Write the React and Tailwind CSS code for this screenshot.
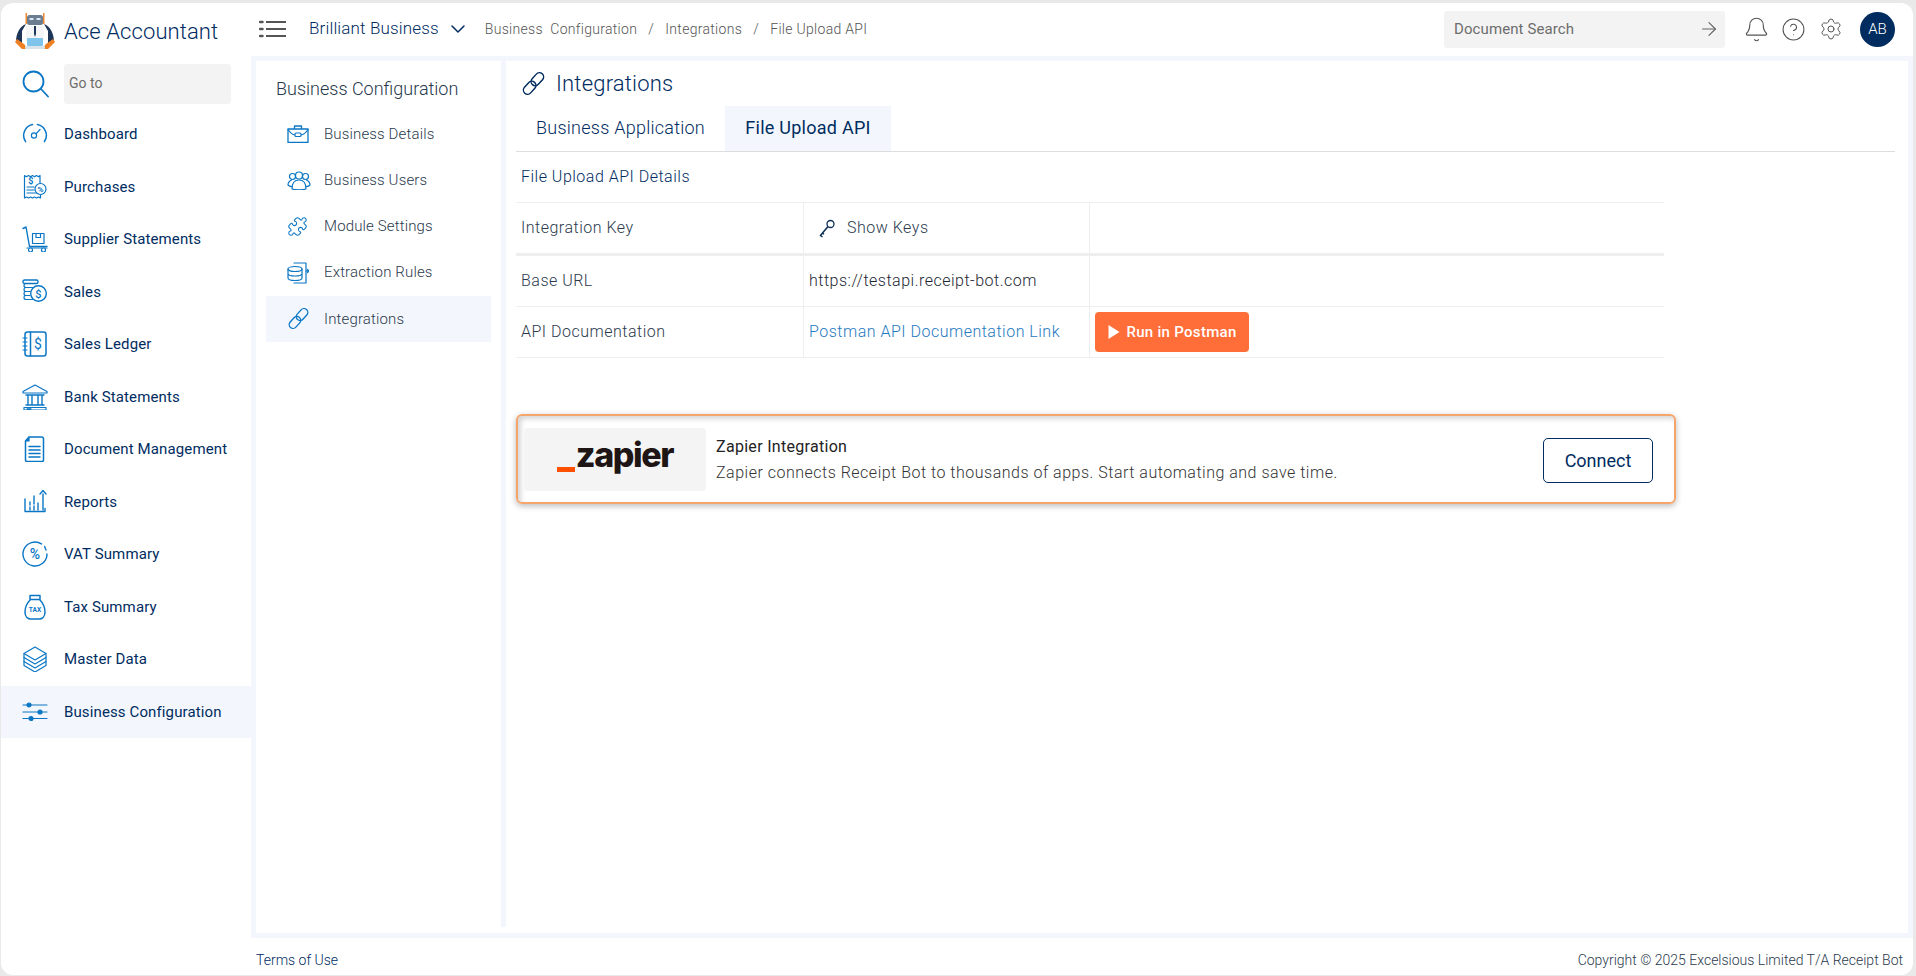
import React from "react";
import { Bell, CircleHelp, Settings, ArrowRight, ChevronDown, Puzzle } from "lucide-react";

const B = "#0b76c4";
const Ic = ({ children, w = 26, h = 26 }) => (
  <svg width={w} height={h} viewBox={`0 0 ${w} ${h}`} fill="none" stroke={B} strokeWidth="1.2" strokeLinecap="round" strokeLinejoin="round" className="shrink-0">
    {children}
  </svg>
);
const T = ({ x, y, s, children, c = B, w = 500 }) => (
  <text x={x} y={y} fontSize={s} fill={c} stroke="none" fontWeight={w} fontFamily="Roboto, sans-serif" textAnchor="middle">{children}</text>
);

const Chain = ({ size = 24, color = B, sw = 1.5 }) => (
  <svg width={size} height={size} viewBox="0 0 24 24" fill="none" stroke={color} strokeWidth={sw} className="shrink-0">
    <g transform="rotate(-48 12 12)">
      <rect x="-0.500" y="8" width="14" height="8" rx="4" />
      <rect x="10.500" y="8" width="14" height="8" rx="4" fill="none" />
    </g>
  </svg>
);

const icons = {
  dash: <Ic><path d="M3.600 20.600A11 11 0 0 1 10.500 3.600M15.500 3.600A11 11 0 0 1 22.400 20.600" strokeWidth="1.500" /><circle cx="12" cy="14.500" r="2.600" /><path d="M14 12.800 18 8.500" /></Ic>,
  purch: <Ic><path d="M2.500 24V1.500l2 1.200 2-1.200 2 1.200 2-1.200 2 1.200 2-1.200 2 1.200 1.500-1.200V9M18.500 21v3l-2-1-2 1-2-1-2 1-2-1-2 1-2-1-2 1" /><T x="9" y="10" s="9" w="700">$</T><path d="M5 13h7M5 16h7M5 19h10" /><circle cx="18.500" cy="15" r="5.500" fill="#fff" /><T x="18.500" y="18" s="8" w="700">%</T></Ic>,
  supp: <Ic><path d="M1 2.500 4 1l3.500 19.500H25" strokeWidth="1.400" /><rect x="10.500" y="7.500" width="11.500" height="10" /><path d="M14 7.500v4h4.500v-4" /><path d="M5 22h20" /><circle cx="8.500" cy="24" r="2" fill="#fff" /><circle cx="21.500" cy="24" r="2" fill="#fff" /></Ic>,
  sales: <Ic><rect x="1" y="1" width="15" height="3.500" rx="1.500" strokeWidth="1.400" /><path d="M4 4.500h10M4 4.500a2 2 0 0 0 0 4h9M4 8.500a2 2 0 0 0 0 4h5M4 12.500a2 2 0 0 0 0 4h4M4 16.500a2 2 0 0 0 0 4h7" /><circle cx="16.500" cy="14.500" r="7.800" fill="#fff" strokeWidth="1.400" /><T x="16.500" y="18.500" s="11">$</T></Ic>,
  ledger: <Ic><rect x="3" y="1" width="21" height="24" rx="2.500" strokeWidth="1.500" /><path d="M8.500 1v24" strokeWidth="1.500" /><path d="M1 7h4M1 11h4M1 15h4M1 19h4" /><T x="16" y="18" s="14" w="400">$</T></Ic>,
  bank: <Ic><path d="M13 1 1 7.500v1.500h24V7.500z" /><path d="M4 11h18M6 11v10M10 11v10M16 11v10M20 11v10M4 21h18" strokeWidth="1.400" /><path d="M2 23.500h22v2.500H2zM5 24.800h4" /></Ic>,
  doc: <Ic><path d="M7 1h12.500a2 2 0 0 1 2 2v21a1.500 1.500 0 0 1-1.500 1.500H5a1.500 1.500 0 0 1-1.500-1.500V5z" strokeWidth="1.500" /><path d="M3.500 5H7V1" fill={B} /><path d="M7 10.500h11M7 14h11M7 17.500h11M7 21h11" strokeWidth="1.500" /></Ic>,
  rep: <Ic><path d="M3 10v12.500h20v-3" strokeWidth="1.400" /><path d="M8 13v3M8 18v3M12 7v8M12 17v4M16 14v7M21 5v16" strokeWidth="1.400" /><path d="M18 5l3-3.500 3 3.500" strokeWidth="1.400" /></Ic>,
  vat: <Ic><path d="M25 13A12 12 0 1 1 19.500 2.900M22.600 5.600 24 9" strokeWidth="1.400" /><T x="13" y="18" s="14" w="500">%</T></Ic>,
  tax: <Ic><path d="M8 1.500h10v4H8zM8.500 5.500C4 10 3 14 3 18c0 5 3 7 6 7h8c3 0 6-2 6-7 0-4-1-8-5.500-12.500" strokeWidth="1.500" /><T x="13" y="18" s="6.500" w="700">TAX</T></Ic>,
  master: <Ic><path d="M13 1 2 7.500 13 14l11-6.500z" /><path d="M2 7.500v12L13 26l11-6.500v-12" /><path d="M2 11.500 13 18l11-6.500M2 15.500 13 22l11-6.500" /></Ic>,
  conf: <Ic h={20}><path d="M1 3h24M1 10h24M1 16.500h24" /><circle cx="7" cy="3" r="2" fill={B} /><circle cx="18" cy="10" r="2" fill={B} /><circle cx="9" cy="16.500" r="2" fill={B} /></Ic>,
};

const nav = [
  ["Dashboard", "dash"], ["Purchases", "purch"], ["Supplier Statements", "supp"], ["Sales", "sales"],
  ["Sales Ledger", "ledger"], ["Bank Statements", "bank"], ["Document Management", "doc"], ["Reports", "rep"],
  ["VAT Summary", "vat"], ["Tax Summary", "tax"], ["Master Data", "master"], ["Business Configuration", "conf"],
];

const sub = [
  ["Business Details", <Ic w={22} h={18}><path d="M1 4h20v13.500H1zM7.500 4V1h7v3" strokeWidth="1.300" /><path d="M1 4.500c2 3 4 5 7 5.500M21 4.500c-2 3-4 5-7 5.500" /><rect x="8" y="8" width="6" height="3.500" rx="1" fill="#fff" /></Ic>],
  ["Business Users", <Ic w={24} h={20}><circle cx="12" cy="5.500" r="3.500" /><circle cx="5.500" cy="6.500" r="3" /><circle cx="18.500" cy="6.500" r="3" /><path d="M5 19c0-6 3-9 7-9s7 3 7 9c-3 1-11 1-14 0zM4.500 10C2.500 11 1 13 1 15c1 1 2 1.500 3.500 1.700M19.500 10c2 1 3.500 3 3.500 5-1 1-2 1.500-3.500 1.700" /></Ic>],
  ["Module Settings", <Puzzle size={21} color={B} strokeWidth={1.200} className="shrink-0" />],
  ["Extraction Rules", <Ic w={22} h={22}><path d="M7 1h12v20H7" /><path d="M19 9h3M22 9l-1.500-1.500M22 9l-1.500 1.500" /><ellipse cx="8" cy="7" rx="7" ry="2.500" fill="#fff" /><path d="M1 7v9c0 1.500 3 2.500 7 2.500s7-1 7-2.500V7M1 11.500c0 1.500 3 2.500 7 2.500s7-1 7-2.500" /></Ic>],
  ["Integrations", <Chain size={23} color={B} sw={1.400} />],
];

const Robot = () => (
  <svg width="40" height="38" viewBox="0 0 40 38" className="shrink-0">
    <path d="M10.500 0h1.500v11h-1.500zM28 0h1.500v11H28z" fill="#f08a32" />
    <rect x="12" y="2" width="16" height="10" rx="2.500" fill="#6a7d91" />
    <rect x="14.500" y="5" width="4" height="2" fill="#d9e8f3" /><rect x="21.500" y="5" width="4" height="2" fill="#d9e8f3" />
    <path d="M11 11C5 13 1 20 1 29l6 3V18zM29 11c6 2 10 9 10 18l-6 3V18z" fill="#1d3658" />
    <path d="M11 13h18v15H11z" fill="#f3f5f7" />
    <path d="M19 13h2v8l-1 3-1-3z" fill="#1d3658" />
    <path d="M0 29l2-3 7 5 4 5H7zM40 29l-2-3-7 5-4 5h6z" fill="#ee7f22" />
    <rect x="12" y="25" width="16" height="8" rx="1" fill="#7fc4ea" />
    <rect x="10" y="33" width="20" height="3" rx="1" fill="#d9e3ea" />
  </svg>
);

const Key = () => (
  <svg width="20" height="20" viewBox="0 0 20 20" fill="none" stroke="#0d2f57" strokeWidth="1.300" className="shrink-0">
    <circle cx="13.500" cy="6" r="3.500" />
    <path d="M11 8.500 3 18M3.500 17.500l2 1.500M5.500 15l1.500 1.300" strokeWidth="1.500" />
  </svg>
);

const Cell = ({ children, className = "" }) => (
  <div className={`flex items-center px-[5px] border-r border-[#eeeeee] whitespace-nowrap ${className}`}>{children}</div>
);

export default function App() {
  return (
    <div className="w-[1916px] h-[976px] bg-[#e9e9e9] pt-[3px] pl-px pr-[3px] pb-px overflow-hidden text-[#002c5f] font-['Roboto',sans-serif]">
      <div className="h-full w-full bg-white rounded-xl overflow-hidden flex">
        {/* Sidebar */}
        <aside className="w-[250px] shrink-0 flex flex-col">
          <div className="h-[58px] flex items-center pl-[14px] gap-[9px] shrink-0">
            <Robot />
            <span className="text-[22px] font-light leading-none whitespace-nowrap tracking-[0.1px]">Ace Accountant</span>
          </div>
          <div className="h-[45px] mb-[2px] flex items-center pl-[21px] gap-[15px] shrink-0">
            <svg width="27" height="28" viewBox="0 0 27 28" fill="none" stroke={B} strokeWidth="1.800" strokeLinecap="round" className="shrink-0">
              <circle cx="11.500" cy="11.500" r="10" /><path d="M19 19l7 7.500" />
            </svg>
            <div className="w-[167px] h-[40px] bg-[#f3f3f3] rounded-[3px] flex items-center pl-[5px] text-[14px] text-[#6d6d6d]">Go to</div>
          </div>
          <nav className="flex flex-col">
            {nav.map(([label, ic], i) => (
              <div key={label} className={`h-[52.500px] flex items-center pl-[21px] gap-[16px] text-[15px] tracking-[0.12px] ${i === 11 ? "bg-[#f3f7fd]" : ""}`}>
                <span className="w-[26px] flex justify-center">{icons[ic]}</span>
                <span className="whitespace-nowrap">{label}</span>
              </div>
            ))}
          </nav>
        </aside>

        {/* Right column */}
        <div className="flex-1 min-w-0 flex flex-col">
          <header className="h-[53px] shrink-0 flex items-center pl-[8px] pr-[18px] pb-[1px]">
            <svg width="28" height="18" viewBox="0 0 28 18" fill="none" stroke="#555" strokeWidth="2" className="shrink-0">
              <path d="M7 2h20M7 9h20M7 16h20" /><path d="M1 2h2.500M1 9h2.500M1 16h2.500" strokeWidth="2.500" strokeLinecap="round" />
            </svg>
            <span className="ml-[22px] text-[17px] font-light tracking-[0.15px] whitespace-nowrap">Brilliant Business</span>
            <ChevronDown size={24} color="#002c5f" strokeWidth={1.500} className="ml-[7px]" />
            <div className="ml-[15px] text-[14px] font-light text-[#555] tracking-[0.3px] whitespace-pre flex-1">Business  Configuration   /   Integrations   /   File Upload API</div>
            <div className="w-[281px] h-[37px] bg-[#f3f3f3] rounded-[3px] flex items-center justify-between pl-[10px] pr-[5px] text-[15px] tracking-[0.1px] text-[#6d6d6d]">
              <span>Document Search</span>
              <ArrowRight size={22} color="#666" strokeWidth={1.300} />
            </div>
            <Bell size={27} color="#555" strokeWidth={1} className="ml-[18px]" />
            <CircleHelp size={25} color="#555" strokeWidth={1} className="ml-[11px]" />
            <Settings size={24} color="#555" strokeWidth={1} className="ml-[13px]" />
            <div className="ml-[17px] w-[35px] h-[35px] rounded-full bg-[#002c5f] text-white text-[15px] font-light flex items-center justify-center">AB</div>
          </header>

          <main className="flex-1 min-h-0 bg-[#f3f7fd] p-[5px]">
            <div className="h-full bg-white flex">
              <section className="w-[245px] shrink-0">
                <h2 className="h-[50px] pt-[16px] pl-[20px] text-[18px] leading-[24px] font-light text-[#26384c]">Business Configuration</h2>
                <div className="pl-[10px] pr-[10px]">
                  {sub.map(([label, ic], i) => (
                    <div key={label} className={`h-[46.200px] flex items-center pl-[21px] text-[15px] tracking-[0.15px] font-light text-[#2b3a4d] ${i === 4 ? "bg-[#f3f7fd]" : ""}`}>
                      <span className="w-[37px] flex">{ic}</span>
                      <span>{label}</span>
                    </div>
                  ))}
                </div>
              </section>
              <div className="w-[5px] h-[866px] bg-[#f3f7fd] shrink-0" />
              <section className="flex-1 min-w-0 pl-[10px] pr-[13px]">
                <div className="h-[45px] flex items-center pl-[5px] gap-[10px]">
                  <Chain size={25} color="#002c5f" sw={1.400} />
                  <span className="text-[22px] font-light tracking-[0.2px]">Integrations</span>
                </div>
                <div className="h-[46px] flex border-b border-[#dddddd] text-[18px] tracking-[0.25px]">
                  <div className="px-[20px] pb-[2px] w-[209px] flex items-center font-light whitespace-nowrap">Business Application</div>
                  <div className="w-[166px] pb-[2px] flex items-center justify-center bg-[#f3f7fd] font-normal whitespace-nowrap">File Upload API</div>
                </div>
                <div className="h-[50px] flex items-center pl-[5px] pb-[1px] text-[16px] tracking-[0.5px] font-light">File Upload API Details</div>
                <div className="w-[1148px] text-[16px] tracking-[0.5px] font-light text-[#2b3a4d] border-t border-[#eeeeee]">
                  <div className="grid grid-cols-[288px_286px_574px] h-[50px]">
                    <Cell>Integration Key</Cell>
                    <Cell><span className="ml-[8px] mr-[10px] flex"><Key /></span>Show Keys</Cell>
                    <Cell className="border-r-0" />
                  </div>
                  <div className="grid grid-cols-[288px_286px_574px] h-[53px] border-t-[3px] border-[#eeeeee]">
                    <Cell>Base URL</Cell>
                    <Cell className="text-[#1c2733]">https://testapi.receipt-bot.com</Cell>
                    <Cell className="border-r-0" />
                  </div>
                  <div className="grid grid-cols-[288px_286px_574px] h-[52px] border-t border-b border-[#eeeeee]">
                    <Cell>API Documentation</Cell>
                    <Cell className="text-[#1f7abf]">Postman API Documentation Link</Cell>
                    <Cell className="border-r-0">
                      <div className="w-[154px] h-[40px] bg-[#ff6d38] rounded-[4px] flex items-center justify-center gap-[5px] text-white text-[15px] tracking-[0.3px] font-medium whitespace-nowrap">
                        <svg width="14" height="16" viewBox="0 0 14 16" fill="#fff"><path d="M1.500 1v14l11-7z" /></svg>
                        Run in Postman
                      </div>
                    </Cell>
                  </div>
                </div>
                <div className="mt-[56px] w-[1160px] h-[90px] border-2 border-[#f5a56b] rounded-[6px] shadow-[0_2px_6px_rgba(0,0,0,0.28),inset_3px_3px_5px_rgba(0,0,0,0.16)] flex items-center pl-[6px] pr-[21px]">
                  <div className="w-[182px] h-[63px] bg-[#f4f4f4] rounded-[4px] flex items-center justify-center shrink-0">
                    <span className="w-[18px] h-[5px] bg-[#ff4f00] self-end mb-[19px] shrink-0" />
                    <span className="ml-[1px] font-['Inter',sans-serif] text-[#201515] text-[34px] font-extrabold tracking-[-1.400px] leading-none mb-[9px]">zapier</span>
                  </div>
                  <div className="ml-[10px] flex-1 pt-[2px]">
                    <div className="text-[16px] leading-[24px] tracking-[0.3px] text-[#222222]">Zapier Integration</div>
                    <div className="mt-[2px] text-[16px] leading-[24px] font-light text-[#333333] tracking-[0.5px] whitespace-nowrap">Zapier connects Receipt Bot to thousands of apps. Start automating and save time.</div>
                  </div>
                  <div className="w-[110px] h-[45px] mt-[2px] border border-[#002c5f] rounded-[5px] flex items-center justify-center text-[18px]">Connect</div>
                </div>
              </section>
            </div>
          </main>

          <footer className="h-[37px] shrink-0 flex items-center justify-between pl-[5px] pr-[10px] pt-[7px] text-[14px] font-light">
            <span>Terms of Use</span>
            <span className="text-[#2b3a4d]">Copyright © 2025 Excelsious Limited T/A Receipt Bot</span>
          </footer>
        </div>
      </div>
    </div>
  );
}
